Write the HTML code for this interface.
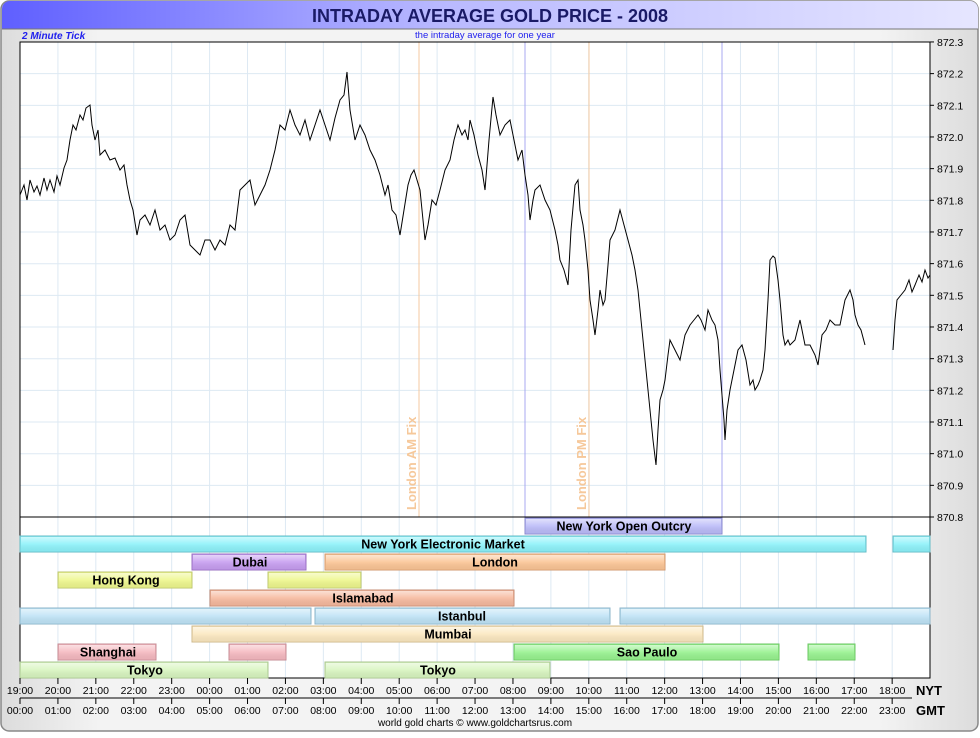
<!DOCTYPE html>
<html><head><style>
body{margin:0;background:#fff;}
svg text{font-family:"Liberation Sans",sans-serif;}
</style></head><body>
<svg width="980" height="733" xmlns="http://www.w3.org/2000/svg">
<defs>
<linearGradient id="tg" x1="0" x2="1" y1="0" y2="0"><stop offset="0" stop-color="#5f5fff"/><stop offset="0.45" stop-color="#b9b9ff"/><stop offset="1" stop-color="#e6e6ff"/></linearGradient>
<linearGradient id="bg" x1="0" x2="1"><stop offset="0" stop-color="#dcdcdc"/><stop offset="0.1" stop-color="#f3f3f3"/><stop offset="0.9" stop-color="#f3f3f3"/><stop offset="1" stop-color="#dcdcdc"/></linearGradient>
<linearGradient id="sh" x1="0" x2="0" y1="0" y2="1"><stop offset="0" stop-color="#fff" stop-opacity="0.55"/><stop offset="0.5" stop-color="#fff" stop-opacity="0.1"/><stop offset="1" stop-color="#000" stop-opacity="0.05"/></linearGradient>
</defs>
<rect x="0" y="0" width="980" height="733" fill="#fff"/>
<rect x="1" y="1" width="977" height="730" rx="8" fill="url(#bg)" stroke="#888" stroke-width="1.5"/>
<path d="M2 29 V9 A8 8 0 0 1 10 1 H970 A8 8 0 0 1 978 9 V29 Z" fill="url(#tg)"/>
<line x1="2" y1="29" x2="978" y2="29" stroke="#777"/>
<text x="490" y="22" text-anchor="middle" font-size="18" font-weight="bold" fill="#1a1a66">INTRADAY AVERAGE GOLD PRICE - 2008</text>
<text x="22" y="39" font-size="10" font-style="italic" font-weight="bold" fill="#2020ee">2 Minute Tick</text>
<text x="485" y="38" text-anchor="middle" font-size="9.5" fill="#2020ee">the intraday average for one year</text>
<rect x="20" y="42" width="910" height="636" fill="#fff"/>
<g stroke="#dde9f3" stroke-width="1" id="grid"></g>
<g stroke="#000" font-size="10"></g>
<line x1="419" y1="42" x2="419" y2="517" stroke="#f4c9a0"/>
<line x1="589" y1="42" x2="589" y2="517" stroke="#f4c9a0"/>
<line x1="525" y1="42" x2="525" y2="534" stroke="#a8a8f0"/>
<line x1="722" y1="42" x2="722" y2="534" stroke="#a8a8f0"/>
<text transform="translate(416,510) rotate(-90)" font-size="13" font-weight="bold" fill="#f6c89a">London AM Fix</text>
<text transform="translate(586,510) rotate(-90)" font-size="13" font-weight="bold" fill="#f6c89a">London PM Fix</text>
<polyline fill="none" stroke="#000" stroke-width="1" points="20,195 24,185 27,200 30,180 34,192 37,186 40,195 44,178 47,190 50,180 54,192 57,176 60,185 64,168 67,160 70,140 73,125 76,130 80,115 83,120 86,108 90,105 92,125 95,140 98,130 100,155 105,150 110,160 115,158 120,170 124,165 127,185 130,200 133,210 137,235 140,220 145,215 150,225 155,210 160,230 165,225 170,240 175,235 180,220 185,215 190,245 195,250 200,255 205,240 210,240 215,250 220,240 225,245 230,225 235,230 240,190 245,185 250,180 255,205 260,195 265,185 270,170 275,150 280,125 285,130 290,110 295,125 300,135 305,120 310,140 315,125 320,110 325,125 330,140 335,118 340,100 344,95 347,72 350,110 355,140 360,125 365,135 370,150 375,160 380,175 385,195 388,185 392,210 396,215 400,235 404,210 408,185 411,175 414,170 417,180 420,190 423,220 425,240 428,225 432,200 436,205 440,190 445,170 450,160 454,140 458,125 462,135 465,130 468,140 470,120 474,135 478,155 482,170 485,190 489,140 493,97 496,115 500,135 505,125 510,120 514,140 518,160 522,150 525,175 528,195 530,220 533,200 535,190 540,185 545,200 550,210 555,230 558,245 560,260 564,270 568,285 571,230 575,185 578,180 580,210 583,225 585,240 588,270 590,300 593,320 595,335 598,310 600,290 603,305 605,300 608,265 610,240 615,230 620,210 624,225 628,240 632,255 635,270 638,290 640,310 643,340 645,360 648,390 650,410 653,440 656,465 658,430 660,400 663,390 665,380 668,355 670,340 675,350 680,360 685,335 690,325 694,320 698,315 701,320 705,330 708,310 712,320 715,325 718,340 720,370 722,395 724,420 725,440 727,410 730,390 733,375 735,365 738,350 742,345 746,360 750,385 753,380 755,390 758,385 760,380 763,370 765,350 768,300 770,260 773,256 775,258 778,280 780,300 783,335 785,345 788,340 790,345 795,340 800,320 803,335 805,345 810,345 815,355 818,365 822,335 826,330 830,320 835,325 840,325 845,300 850,290 853,300 855,315 858,325 861,330 865,345"/>
<polyline fill="none" stroke="#000" stroke-width="1" points="893,350 895,320 897,300 901,295 905,290 909,280 912,292 915,285 919,275 922,282 925,270 928,278 930,275"/>
<line x1="20" y1="517" x2="930" y2="517" stroke="#000"/>
<rect x="20" y="42" width="910" height="636" fill="none" stroke="#000"/>
<g id="bars"></g>
<g id="ax" font-size="10.5" fill="#000"></g>
<text x="916" y="695" font-size="13" font-weight="bold">NYT</text>
<text x="916" y="715" font-size="13" font-weight="bold">GMT</text>
<text x="475" y="726" text-anchor="middle" font-size="10">world gold charts © www.goldchartsrus.com</text>
<script>
var ns="http://www.w3.org/2000/svg";
function el(p,t,a,txt){var e=document.createElementNS(ns,t);for(var k in a)e.setAttribute(k,a[k]);if(txt)e.textContent=txt;p.appendChild(e);return e;}
var g=document.getElementById('grid'),svg=document.querySelector('svg');
for(var i=1;i<24;i++){el(g,'line',{x1:20+i*37.92,y1:42,x2:20+i*37.92,y2:678});}
for(var j=1;j<15;j++){el(g,'line',{x1:20,y1:42+j*31.67,x2:930,y2:42+j*31.67});}
var ax=document.getElementById('ax');
for(var j=0;j<=15;j++){var y=517-j*31.67;el(ax,'line',{x1:930,y1:y,x2:934,y2:y,stroke:'#000'});el(ax,'text',{x:937,y:y+4,'font-size':10.5},(870.8+j*0.1).toFixed(1));}
for(var i=0;i<24;i++){var x=20+i*37.92;var n=(19+i)%24,gm=i;
el(ax,'line',{x1:x,y1:678,x2:x,y2:684,stroke:'#000'});
el(ax,'line',{x1:x,y1:698,x2:x,y2:704,stroke:'#000'});
if(i<23||true){el(ax,'text',{x:x,y:694,'text-anchor':'middle'},(n<10?'0':'')+n+':00');
el(ax,'text',{x:x,y:714,'text-anchor':'middle'},(gm<10?'0':'')+gm+':00');}}
el(ax,'line',{x1:20,y1:698,x2:912,y2:698,stroke:'#000'});
var b=document.getElementById('bars');
function bar(x1,x2,row,fill,st,label,lx){var y=518+row*18;
el(b,'rect',{x:x1,y:y,width:x2-x1,height:16,fill:fill,stroke:st});
el(b,'rect',{x:x1+1,y:y+1,width:x2-x1-2,height:14,fill:'url(#sh)'});
if(label)el(b,'text',{x:lx,y:y+12.5,'text-anchor':'middle','font-size':12.5,'font-weight':'bold'},label);}
bar(525,722,0,'#bbbbf8','#8888cc','New York Open Outcry',624);
bar(20,866,1,'#8ef2fa','#66bbc4','New York Electronic Market',443);
bar(893,930,1,'#8ef2fa','#66bbc4');
bar(192,306,2,'#c79ef0','#9a70c0','Dubai',250);
bar(325,665,2,'#fbc596','#d09a70','London',495);
bar(58,192,3,'#eef78e','#bcc470','Hong Kong',126);
bar(268,361,3,'#eef78e','#bcc470');
bar(210,514,4,'#f6b99e','#c48c74','Islamabad',363);
bar(20,311,5,'#bfe3f6','#8eb4c8');
bar(315,610,5,'#bfe3f6','#8eb4c8','Istanbul',462);
bar(620,930,5,'#bfe3f6','#8eb4c8');
bar(192,703,6,'#fbe8c0','#cdb88e','Mumbai',448);
bar(58,156,7,'#f5b9c0','#c48c94','Shanghai',108);
bar(229,286,7,'#f5b9c0','#c48c94');
bar(514,779,7,'#98f290','#6cc464','Sao Paulo',647);
bar(808,855,7,'#98f290','#6cc464');
bar(20,268,8,'#d8f5c0','#a8c490','Tokyo',145);
bar(325,550,8,'#d8f5c0','#a8c490','Tokyo',438);
</script>
</svg>
</body></html>
